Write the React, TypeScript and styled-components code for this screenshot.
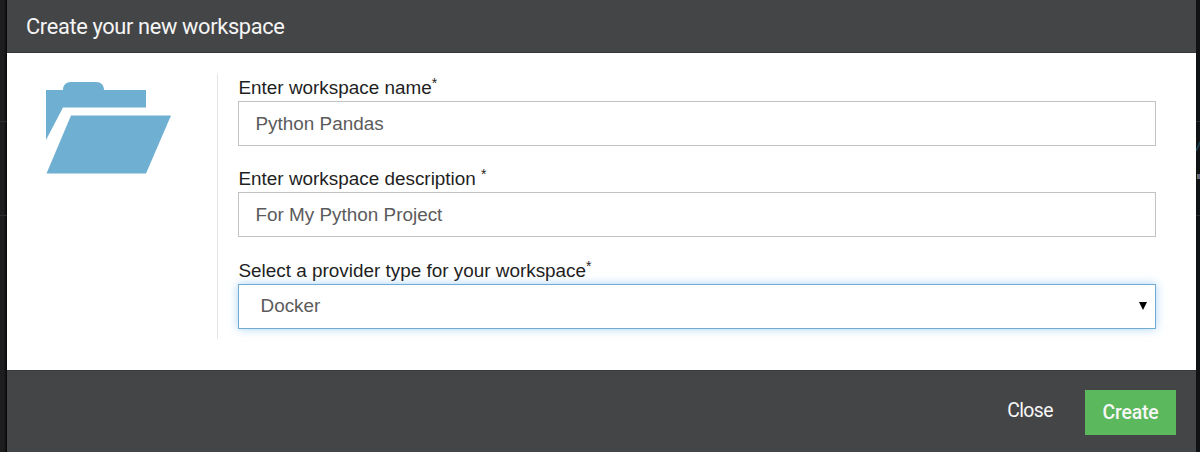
import React from "react";
import styled, { createGlobalStyle } from "styled-components";

const GlobalStyle = createGlobalStyle`
  * { box-sizing: border-box; }
  body { margin: 0; overflow: hidden; background: #1c1c1e; }
`;

const Backdrop = styled.div`
  height: 452px;
  padding: 0 4px 0 7px;
  background: linear-gradient(115deg, transparent 40%, #1d4f66 50%, transparent 75%) 100% 141px / 4px 10px no-repeat,
    linear-gradient(90deg, #77784f, #55609a) 100% 174px / 3px 5px no-repeat,
    linear-gradient(#2b2c2e, #2b2c2e) 0 121px / 100% 1px no-repeat,
    linear-gradient(#2b2c2e, #2b2c2e) 0 215px / 100% 1px no-repeat,
    linear-gradient(90deg, #1d1d1f 0, #1d1d1f 4px, #050505 7px, #111213 100%);
  font-family: "Liberation Sans", Arial, sans-serif;
`;

const Dialog = styled.section`
  height: 452px;
  display: flex;
  flex-direction: column;
  background: #fff;
`;

const Header = styled.header`
  height: 53px;
  padding: 1px 19px 0;
  display: flex;
  align-items: center;
  background: #444547;
  border-bottom: 1px solid #37363a;
`;

const Title = styled.h1`
  margin: 0;
  font: 400 21.8px/26px Roboto, sans-serif;
  letter-spacing: -0.35px;
  color: #f5f5f5;
`;

const Body = styled.main`
  height: 317px;
  display: flex;
  padding: 21px 40px 31px 39px;
`;

const IconColumn = styled.div`
  width: 172px;
  border-right: 1px solid #e6e6e6;
  padding-top: 8px;
`;

const FolderIcon = styled.svg`
  display: block;
  width: 125px;
  height: 92px;
  fill: #6fafd1;
`;

const Form = styled.form`
  flex: 1;
  padding-left: 20px;
`;

const Field = styled.div`
  height: 91.4px;
`;

const Label = styled.label`
  display: flex;
  height: 27px;
  padding-left: 0.5px;
  font-size: 18.9px;
  line-height: 27px;
  color: #1f1f1f;
  white-space: pre;
`;

const Required = styled.span`
  font-size: 14px;
  line-height: 18px;
`;

const Control = styled.div<{ $focused?: boolean }>`
  height: 45px;
  padding: 0 8px 0 ${(p) => (p.$focused ? 21.5 : 16.5)}px;
  display: flex;
  align-items: center;
  justify-content: space-between;
  border: 1px solid ${(p) => (p.$focused ? "#6fabd3" : "#c2c2c2")};
  box-shadow: ${(p) => (p.$focused ? "0 0 9px rgba(102, 175, 233, 0.55)" : "none")};
  font-size: 18.9px;
  color: #5b5b5b;
`;

const Arrow = styled.svg`
  width: 8px;
  height: 8px;
  fill: #000;
`;

const Footer = styled.footer`
  flex: 1;
  padding: 19px 20px 0;
  display: flex;
  justify-content: flex-end;
  align-items: flex-start;
  background: #444547;
  border-top: 1px solid #393a3a;
`;

const Button = styled.button<{ $primary?: boolean }>`
  width: ${(p) => (p.$primary ? 91 : 110)}px;
  height: 45px;
  padding: ${(p) => (p.$primary ? "0 0 1px" : "0 0 4px")};
  border: 0;
  background: ${(p) => (p.$primary ? "#5cb85c" : "transparent")};
  color: #f7f7f7;
  font: ${(p) => (p.$primary ? 500 : 400)} 19.4px Roboto, sans-serif;
  letter-spacing: ${(p) => (p.$primary ? -0.2 : -0.6)}px;
`;

export default function App() {
  return (
    <>
      <GlobalStyle />
      <Backdrop>
        <Dialog>
          <Header>
            <Title>Create your new workspace</Title>
          </Header>
          <Body>
            <IconColumn>
              <FolderIcon viewBox="0 0 125 92">
                <path d="M0 8H17C17 3 20 0 25 0H50C55 0 58 3 58 8H100V25.5H17L0 58Z" />
                <path d="M25 33.5H125L100 91.5H0.5Z" />
              </FolderIcon>
            </IconColumn>
            <Form>
              <Field>
                <Label>Enter workspace name<Required>*</Required></Label>
                <Control>Python Pandas</Control>
              </Field>
              <Field>
                <Label>{"Enter workspace description "}<Required>*</Required></Label>
                <Control>For My Python Project</Control>
              </Field>
              <Field>
                <Label>Select a provider type for your workspace<Required>*</Required></Label>
                <Control $focused>
                  Docker
                  <Arrow viewBox="0 0 8 8"><path d="M0 0H8L4 8Z" /></Arrow>
                </Control>
              </Field>
            </Form>
          </Body>
          <Footer>
            <Button type="button">Close</Button>
            <Button type="button" $primary>Create</Button>
          </Footer>
        </Dialog>
      </Backdrop>
    </>
  );
}
